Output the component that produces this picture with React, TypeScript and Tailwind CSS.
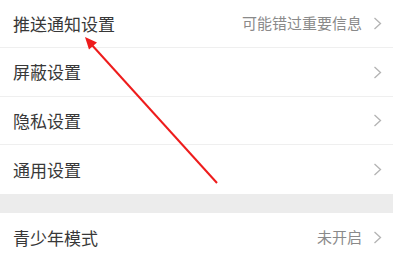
const rows = [
  { label: "推送通知设置", value: "可能错过重要信息", h: "h-[48px]" },
  { label: "屏蔽设置", value: "", h: "h-[49px]" },
  { label: "隐私设置", value: "", h: "h-[48px]" },
  { label: "通用设置", value: "", h: "h-[49px]", last: true },
];

const Chevron = () => (
  <svg width="9" height="13" viewBox="0 0 9 13" className="shrink-0">
    <polyline points="1.5,1 7.5,6.5 1.5,12" fill="none" stroke="#b3b3b3" strokeWidth="1.3" />
  </svg>
);

const Row = ({ label, value, h, last }: { label: string; value: string; h: string; last?: boolean }) => (
  <div className={`flex ${h} items-center justify-between pl-[13px] pr-[11px] ${last ? "" : "border-b border-[#efefef]"}`}>
    <span className="text-[17px] text-[#383838]">{label}</span>
    <div className="flex items-center gap-[11px]">
      {value && <span className="text-[15px] text-[#8a8a8a]">{value}</span>}
      <Chevron />
    </div>
  </div>
);

export default function App() {
  return (
    <div
      className="relative h-[261px] w-[400px] overflow-hidden bg-white"
      style={{ fontFamily: '"Noto Sans CJK SC", "Noto Sans", sans-serif' }}
    >
      <div className="w-[393px]">
        {rows.map((r) => (
          <Row key={r.label} {...r} />
        ))}
        <div className="h-[19px] bg-[#ececec]" />
        <Row label="青少年模式" value="未开启" h="h-[49px]" last />
      </div>
      <svg className="pointer-events-none absolute left-0 top-0" width="400" height="261">
        <line x1="217" y1="183" x2="91" y2="44" stroke="#ee1c1c" strokeWidth="2" />
        <polygon points="85,37 97,42.4 89,49.5" fill="#ee1c1c" />
      </svg>
    </div>
  );
}
